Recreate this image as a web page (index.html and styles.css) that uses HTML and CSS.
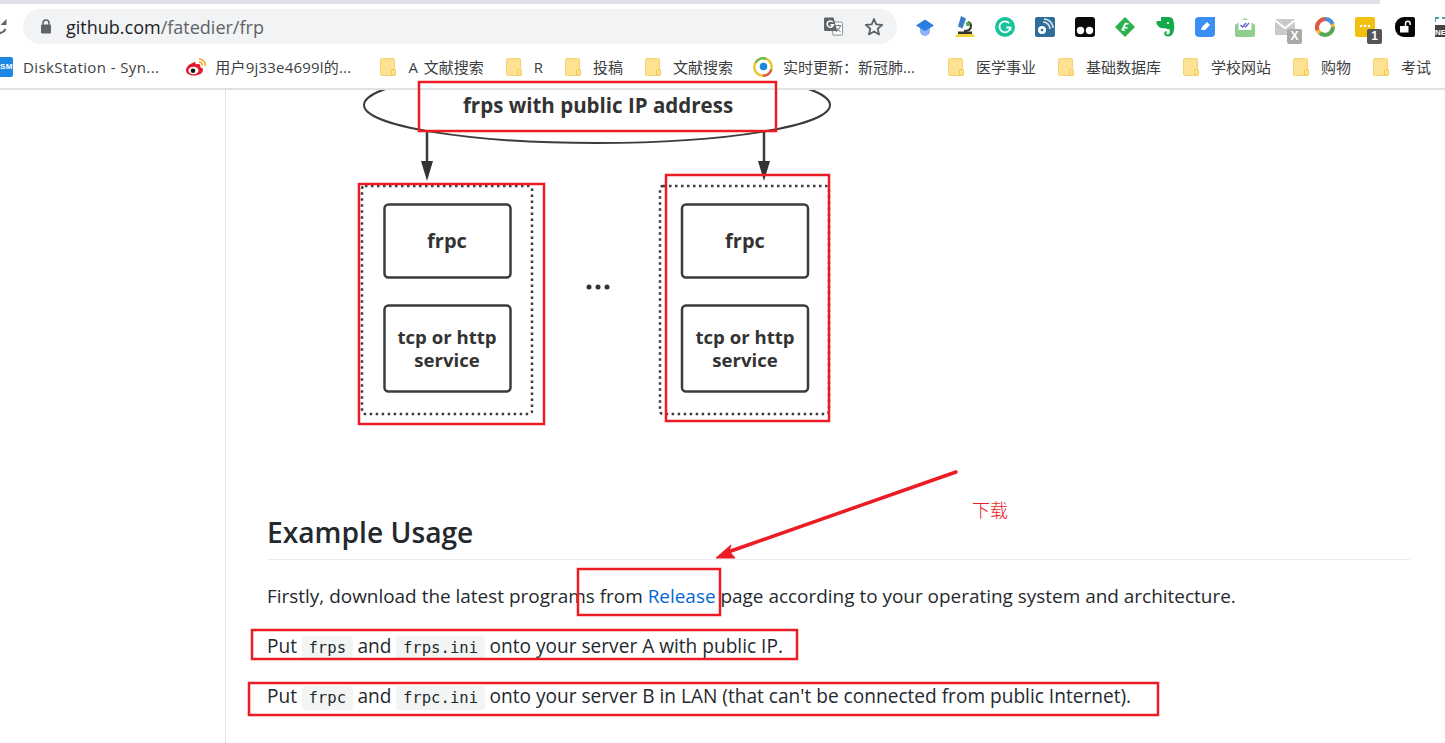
FILE: index.html
```html
<!DOCTYPE html>
<html lang="en">
<head>
    <meta charset="UTF-8">
    <meta name="viewport" content="width=device-width, initial-scale=1.0">
    <title>fatedier/frp</title>
    <link rel="stylesheet" href="styles.css">
</head>
<body>

<div class="chrome">
    <div class="tabstrip"></div>

    <!-- toolbar -->
    <div class="toolbar">
        <svg class="reload" width="8" height="18" viewBox="0 0 8 18"><path d="M-4 3a6.500 6.500 0 1 0 9.500 8" fill="none" stroke="#5f6368" stroke-width="2"/><path d="M6.500 1v6h-6z" fill="#5f6368"/></svg>
        <div class="omnibox">
            <svg class="lock" width="12" height="15" viewBox="0 0 12 15"><path d="M3 6V4a3 3 0 0 1 6 0v2" fill="none" stroke="#5f6368" stroke-width="1.500"/><rect x="1" y="5.500" width="10" height="9" rx="1.200" fill="#5f6368"/></svg>
            <span class="url">github.com<span class="url-path">/fatedier/frp</span></span>
            <svg class="translate" width="19" height="19" viewBox="0 0 21 20"><path d="M8 5h11a1.500 1.500 0 0 1 1.500 1.500V18a1.500 1.500 0 0 1-1.500 1.500H10z" fill="#fff" stroke="#80868b"/><path d="M13 9h6M16 8v1.500M18 9.500c-.8 3-2.500 5-5 6.500M14 11.500c1 2 2.500 3.500 4.500 4.500" fill="none" stroke="#5f6368" stroke-width="1"/><path d="M1.500 0h9L14.500 15h-13A1.500 1.500 0 0 1 0 13.500v-12A1.500 1.500 0 0 1 1.500 0z" fill="#5f6368"/><path d="M9.800 5.200a3.500 3.500 0 1 0 .6 3H7.200" fill="none" stroke="#fff" stroke-width="1.700"/></svg>
            <svg class="star" width="20" height="19" viewBox="0 0 20 19"><path d="M10 2l2.300 5.400 5.900.5-4.500 3.900 1.400 5.700L10 14.500 4.900 17.500l1.400-5.700L1.800 7.900l5.900-.5z" fill="none" stroke="#5f6368" stroke-width="1.800" stroke-linejoin="round"/></svg>
        </div>
        <div class="extensions">
            <div class="ext"><svg width="20" height="20" viewBox="0 0 20 20"><path d="M5 10h10v4a5 5 0 0 1-10 0z" fill="#8ab4f8"/><path d="M10 2.500L19 8.500l-9 5.500-9-5.500z" fill="#2b7de0"/></svg></div>
            <div class="ext"><svg width="22" height="22" viewBox="0 0 22 22"><path d="M1 21l2-3h16l2 3z" fill="#f2d43d"/><rect x="4" y="15.500" width="14" height="2.500" fill="#333"/><path d="M10 15c5 0 7-2 7-5 0-2-1-3.500-3-4" fill="none" stroke="#333" stroke-width="2"/><path d="M7 0l5 2.500-3.500 10L4 10.500z" fill="#3a7ec8"/><circle cx="14" cy="8" r="2.300" fill="#4caf50"/></svg></div>
            <div class="ext"><svg width="20" height="20" viewBox="0 0 20 20"><circle cx="10" cy="10" r="10" fill="#15c39a"/><path d="M14.200 6.300a5.500 5.500 0 1 0 1.200 4.200h-4" fill="none" stroke="#fff" stroke-width="1.800"/><path d="M15.500 10.500v3" stroke="#fff" stroke-width="1.800"/></svg></div>
            <div class="ext"><svg width="20" height="20" viewBox="0 0 20 20"><rect width="20" height="20" rx="2" fill="#2f6c98"/><circle cx="7" cy="13" r="4" fill="#fff"/><circle cx="7" cy="13" r="1.300" fill="#2f6c98"/><path d="M8 5a7 7 0 0 1 7 7M9 1.800A10 10 0 0 1 18.200 11" fill="none" stroke="#cfe3f2" stroke-width="1.700"/></svg></div>
            <div class="ext"><svg width="20" height="20" viewBox="0 0 20 20"><rect width="20" height="20" rx="3" fill="#0a0a0a"/><circle cx="5.500" cy="13.500" r="3.700" fill="#fff"/><circle cx="14.500" cy="13.500" r="3.700" fill="#fff"/></svg></div>
            <div class="ext"><svg width="20" height="20" viewBox="0 0 20 20"><path d="M10 0l10 10-10 10L0 10z" fill="#2bb24c"/><path d="M7 13.500l3.500-7 3 .5M8.500 10.500l4 .5M7.500 13l2.500.5" fill="none" stroke="#fff" stroke-width="1.700"/></svg></div>
            <div class="ext"><svg width="20" height="22" viewBox="0 0 20 22"><path d="M2 5h4V1h8c2.500 0 4 1.500 4.500 4 1 4 1 8 0 11-.7 2.800-2.800 4.500-5.500 4.500-2.800 0-3.800-1.500-3.800-3.200 0-1.300 1-2.300 2.500-2.300v1.700c-.8.200-.8 1.800 1 1.800 1.800 0 2.500-1.800 2-5-1-.2-3-.3-4.700-1.500-3.500 1-6.500-.8-8-3.500C1.500 8 1.200 6.500 2 5z" fill="#14a94a"/><circle cx="13" cy="7" r="1" fill="#fff"/></svg></div>
            <div class="ext"><svg width="20" height="20" viewBox="0 0 20 20"><path d="M4 0h16v16a4 4 0 0 1-4 4H4a4 4 0 0 1-4-4V4a4 4 0 0 1 4-4z" fill="#3b8ef3"/><path d="M6 13l1-3 5-5 3 3-5 5z" fill="#fff"/></svg></div>
            <div class="ext"><svg width="20" height="20" viewBox="0 0 20 20"><path d="M0 8l10-7 10 7v10a2 2 0 0 1-2 2H2a2 2 0 0 1-2-2z" fill="#8fce8f"/><rect x="3.500" y="3" width="13" height="10" fill="#fff"/><path d="M5.500 8l2 2 3.500-4M9.500 9.500l1 .5 3.500-4" fill="none" stroke="#5a5ac8" stroke-width="1.200"/></svg></div>
            <div class="ext"><svg width="20" height="16" viewBox="0 0 20 16"><path d="M0 0h20L10 8zM0 2.500l10 8 10-8V16H0z" fill="#c9c9c9"/></svg><span class="badge badge-x">X</span></div>
            <div class="ext"><svg width="20" height="20" viewBox="0 0 20 20"><circle cx="10" cy="10" r="8" fill="none" stroke="#f6b73c" stroke-width="4"/><path d="M10 2a8 8 0 0 1 7.500 5" fill="none" stroke="#4a90e2" stroke-width="4"/><path d="M2.500 13a8 8 0 0 1 2-8.500A8 8 0 0 1 10 2" fill="none" stroke="#e2574c" stroke-width="4"/><path d="M18 10a8 8 0 0 1-8 8 8 8 0 0 1-5-2" fill="none" stroke="#52a85a" stroke-width="4"/></svg></div>
            <div class="ext"><svg width="20" height="20" viewBox="0 0 20 20"><rect width="20" height="20" rx="2" fill="#f2c10f"/><circle cx="6" cy="9" r="1.300" fill="#fff"/><circle cx="10" cy="9" r="1.300" fill="#fff"/><circle cx="14" cy="9" r="1.300" fill="#fff"/></svg><span class="badge badge-num">1</span></div>
            <div class="ext"><svg width="20" height="20" viewBox="0 0 20 20"><path d="M9 0h9a2 2 0 0 1 2 2v16a2 2 0 0 1-2 2H9A9 9 0 0 1 0 11V9a9 9 0 0 1 9-9z" fill="#050505"/><rect x="5" y="9" width="8.500" height="6.500" fill="#fff"/><path d="M10.500 9V6.500a2.300 2.300 0 0 1 4.600 0V8" fill="none" stroke="#fff" stroke-width="1.500"/></svg></div>
            <div class="ext ext-cut"><svg width="20" height="20" viewBox="0 0 20 20"><rect y="8" width="20" height="12" fill="#444"/><path d="M0 5V1h4M7 1h6M16 1h4v4" fill="none" stroke="#3aa7a0" stroke-width="2"/><text x="0" y="17.500" class="ne-text">NE</text></svg></div>
        </div>
    </div>

    <!-- bookmarks -->
    <div class="bookmarks">
        <div class="bm bm-first">
            <svg class="fav" width="16" height="20" viewBox="0 0 16 20"><rect width="16" height="20" rx="2" fill="#1e88e5"/></svg>
            <span class="fav-sm">SM</span>
            <span>DiskStation - Syn...</span>
        </div>
        <div class="bm bm-weibo">
            <svg class="fav-wide" width="20" height="18" viewBox="0 0 20 18"><path d="M8 4.500C3.500 5.500 0 9 0 12.500 0 15.500 3.800 17.500 8 17.500c5 0 9-2.500 9-5.500 0-2-2-2.500-2.800-2.800.6-2 0-3.700-3-3.200-1.500.5-2 .5-1.700-.8.200-1.400-.5-1.200-1.500-.7z" fill="#e6162d"/><ellipse cx="7.500" cy="12.500" rx="5" ry="3.800" fill="#fff"/><circle cx="7" cy="12.800" r="2.300" fill="#111"/><path d="M13 1a6 6 0 0 1 6 7M13 4a3 3 0 0 1 3.200 3.500" fill="none" stroke="#f5a623" stroke-width="1.500"/></svg>
            <span>用户9j33e4699l的...</span>
        </div>
        <div class="bm bm-spaced"><i class="folder"></i><span>A 文献搜索</span></div>
        <div class="bm"><i class="folder"></i><span>R</span></div>
        <div class="bm"><i class="folder"></i><span>投稿</span></div>
        <div class="bm"><i class="folder"></i><span>文献搜索</span></div>
        <div class="bm bm-news">
            <svg class="fav-wide" width="20" height="20" viewBox="0 0 20 20"><circle cx="10" cy="10" r="8.800" fill="none" stroke="#e8c62a" stroke-width="2.400"/><path d="M2.800 5.500A8.800 8.800 0 0 1 13 1.700" fill="none" stroke="#5cb85c" stroke-width="2.400"/><path d="M18.300 12.500a8.800 8.800 0 0 1-8.300 6.300" fill="none" stroke="#e2574c" stroke-width="2.400"/><circle cx="10.500" cy="9.500" r="3.800" fill="#1c87d8"/></svg>
            <span>实时更新：新冠肺...</span>
        </div>
        <div class="bm bm-gap"><i class="folder"></i><span>医学事业</span></div>
        <div class="bm"><i class="folder"></i><span>基础数据库</span></div>
        <div class="bm"><i class="folder"></i><span>学校网站</span></div>
        <div class="bm"><i class="folder"></i><span>购物</span></div>
        <div class="bm"><i class="folder"></i><span>考试</span></div>
    </div>
</div>

<div class="page">
    <div class="article">
        <svg class="diagram" width="570" height="390" viewBox="267 90 570 390">
            <ellipse cx="597" cy="105" rx="233" ry="38" class="d-line d-thin"/>
            <path d="M427 131v32M764 131v32" class="d-line"/>
            <path d="M421 161h12l-6 20zM758 161h12l-6 20z" fill="#333"/>
            <rect x="362" y="186" width="170" height="228" rx="3" class="d-dots"/>
            <rect x="660" y="186" width="169" height="228" rx="3" class="d-dots"/>
            <rect x="384.500" y="204.500" width="126" height="73" rx="4" class="d-line"/>
            <rect x="384.500" y="305.500" width="126" height="86" rx="4" class="d-line"/>
            <rect x="682" y="204.500" width="126" height="73" rx="4" class="d-line"/>
            <rect x="682" y="305.500" width="126" height="86" rx="4" class="d-line"/>
            <text x="598" y="113" class="d-text d-title">frps with public IP address</text>
            <text x="447" y="248" class="d-text">frpc</text>
            <text x="745" y="248" class="d-text">frpc</text>
            <text x="447" y="344" class="d-text d-small">tcp or http</text>
            <text x="447" y="367" class="d-text d-small">service</text>
            <text x="745" y="344" class="d-text d-small">tcp or http</text>
            <text x="745" y="367" class="d-text d-small">service</text>
            <circle cx="589" cy="287" r="2.500" fill="#333"/>
            <circle cx="598" cy="287" r="2.500" fill="#333"/>
            <circle cx="607" cy="287" r="2.500" fill="#333"/>
        </svg>

        <h2>Example Usage</h2>
        <p>Firstly, download the latest programs from <a href="#">Release</a> page according to your operating system and architecture.</p>
        <p class="with-code">Put <code>frps</code> and <code>frps.ini</code> onto your server A with public IP.</p>
        <p class="with-code">Put <code>frpc</code> and <code>frpc.ini</code> onto your server B in LAN (that can't be connected from public Internet).</p>
    </div>
</div>

<!-- hand drawn notes on top of the screenshot -->
<svg class="notes" width="1445" height="743" viewBox="0 0 1445 743">
    <rect x="419" y="82" width="357" height="49"/>
    <rect x="359" y="184" width="185" height="240"/>
    <rect x="666" y="175" width="163" height="246"/>
    <rect x="578" y="569" width="142" height="46"/>
    <rect x="252" y="630" width="545" height="29"/>
    <rect x="249" y="683" width="909" height="32"/>
    <path d="M956 472L728 552" class="note-arrow"/>
    <path d="M716 558L731 545L729 551L735 558z" class="note-head"/>
</svg>
<div class="note-label">下载</div>

</body>
</html>
```

FILE: styles.css
```css
html, body {
    margin: 0;
    padding: 0;
    height: 743px;
    overflow: hidden;
    background-color: #fff;
}
body {
    font-family: "Open Sans", "Noto Sans CJK SC", sans-serif;
    position: relative;
}

/* browser */
.chrome {
    height: 90px;
    box-sizing: border-box;
    border-bottom: 2px solid #dee1e6;
    background-color: #fff;
}
.tabstrip {
    height: 4px;
    width: 1380px;
    background-color: #dee1e6;
}
.toolbar {
    display: flex;
    align-items: center;
    height: 41px;
    padding-top: 4px;
    box-sizing: border-box;
}
.reload {
    width: 8px;
    margin-right: 15px;
    flex: none;
}
.omnibox {
    display: flex;
    align-items: center;
    width: 874px;
    height: 35px;
    box-sizing: border-box;
    padding: 0 13px 0 17px;
    background-color: #f1f3f4;
    border-radius: 18px;
    flex: none;
}
.lock {
    margin-right: 14px;
}
.url {
    padding-top: 1px;
    font-size: 18px;
    color: #202124;
    flex: 1;
}
.url-path {
    color: #5f6368;
}
.translate {
    margin-right: 21px;
}
.extensions {
    display: flex;
    margin-left: 8px;
}
.ext {
    position: relative;
    display: flex;
    align-items: center;
    justify-content: center;
    width: 40px;
    height: 26px;
    flex: none;
}
.ne-text {
    font-family: "Liberation Sans", sans-serif;
    font-size: 8px;
    font-weight: bold;
    fill: #fff;
}
.badge {
    position: absolute;
    right: 3px;
    bottom: -4px;
    width: 15px;
    height: 15px;
    font-family: "Liberation Sans", sans-serif;
    font-size: 12px;
    font-weight: bold;
    line-height: 15px;
    text-align: center;
    color: #fff;
    border-radius: 2px;
}
.badge-x {
    background-color: #a9a9a9;
}
.badge-num {
    background-color: #555;
}

.bookmarks {
    display: flex;
    align-items: center;
    height: 43px;
    margin-left: -3px;
    gap: 22px;
    font-size: 15px;
    color: #3c4043;
    white-space: nowrap;
}
.bm {
    display: flex;
    align-items: center;
    gap: 13px;
    position: relative;
}
.bm-first {
    gap: 10px;
    margin-right: 5px;
    letter-spacing: 0.400px;
}
.bm-weibo {
    margin-right: 7px;
    letter-spacing: 0.200px;
}
.bm-weibo .fav-wide {
    margin-right: -4px;
}
.bm-spaced {
    word-spacing: 2px;
}
.bm-news {
    margin-left: -2px;
}
.bm-gap {
    margin-left: 11px;
}
.fav-sm {
    position: absolute;
    left: 3px;
    top: 50%;
    margin-top: -5px;
    font-family: "Liberation Sans", sans-serif;
    font-size: 8px;
    line-height: 10px;
    font-weight: bold;
    color: #fff;
}
.fav-wide {
    margin-right: -3px;
}
.folder {
    display: block;
    position: relative;
    width: 15px;
    height: 18px;
    box-sizing: border-box;
    background-color: #fde293;
    border: 1px solid #f6d36c;
    border-radius: 2px;
}
.folder::after {
    content: "";
    position: absolute;
    right: -2px;
    bottom: -1px;
    width: 3px;
    height: 5px;
    background-color: #fde293;
    border: 1px solid #f2c94c;
    border-radius: 2px;
}

/* page */
.page {
    height: 653px;
    margin-left: 225px;
    border-left: 1px solid #e1e4e8;
    overflow: hidden;
}
.article {
    width: 1143px;
    padding-left: 41px;
    font-size: 18.940px;
    line-height: 30px;
    color: #24292e;
}
.diagram {
    display: block;
}
.d-line {
    fill: none;
    stroke: #3c3c3c;
    stroke-width: 2.500;
}
.d-thin {
    stroke-width: 2;
}
.d-dots {
    fill: none;
    stroke: #3c3c3c;
    stroke-width: 2.500;
    stroke-dasharray: 2.500 3.500;
}
.d-text {
    font-family: "Open Sans", sans-serif;
    font-size: 20px;
    font-weight: 700;
    fill: #333;
    text-anchor: middle;
}
.d-title {
    font-size: 20.500px;
}
.d-small {
    font-size: 18.600px;
}
h2 {
    margin: 34px 0 21px;
    padding-bottom: 8px;
    font-size: 28.200px;
    font-weight: 600;
    line-height: 37px;
    border-bottom: 1px solid #eaecef;
}
.article p {
    margin: 0 0 20px;
    white-space: nowrap;
}
.article .with-code {
    font-size: 19.100px;
}
.article a {
    color: #0366d6;
    text-decoration: none;
}
code {
    padding: 3px 6.500px;
    font-family: "DejaVu Sans Mono", monospace;
    font-size: 15.600px;
    line-height: 16px;
    background-color: #f3f4f4;
    border-radius: 4px;
}

/* annotations */
.notes {
    position: absolute;
    left: 0;
    top: 0;
    fill: none;
    stroke: #ed1c24;
    stroke-width: 2.500;
}
.note-arrow {
    stroke-width: 3.500;
    stroke-linecap: round;
}
.note-head {
    fill: #ed1c24;
    stroke-width: 1;
}
.note-label {
    position: absolute;
    left: 972px;
    top: 496px;
    font-family: "Noto Sans CJK SC", sans-serif;
    font-size: 18px;
    font-weight: 300;
    line-height: 26px;
    color: #ed1c24;
}
```
